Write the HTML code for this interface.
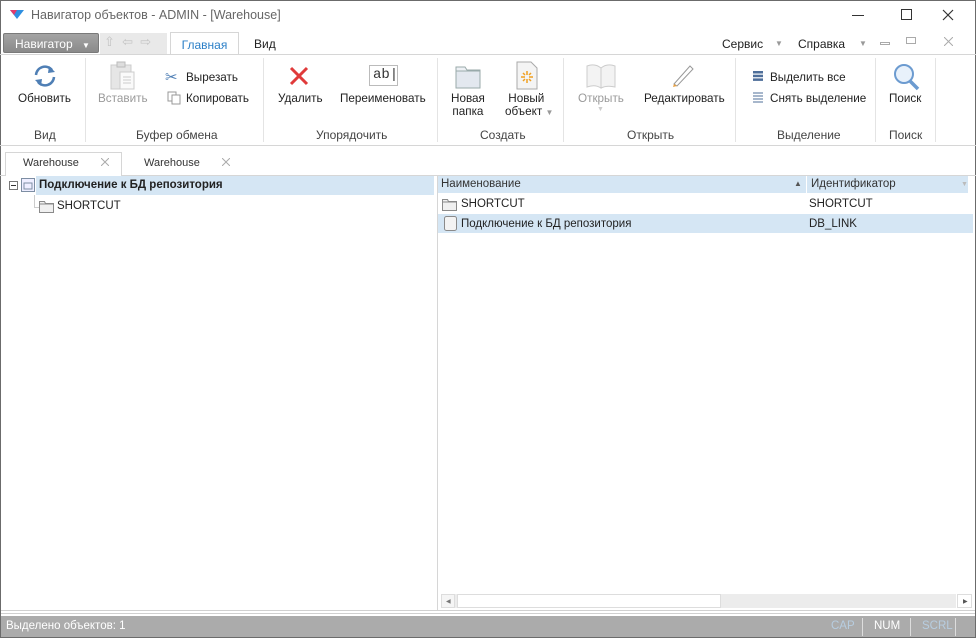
<!DOCTYPE html>
<html><head><meta charset="utf-8"><style>
*{box-sizing:border-box;margin:0;padding:0}
body{width:976px;height:638px;overflow:hidden;background:#fff;font-family:"Liberation Sans","DejaVu Sans",sans-serif;font-size:12px;color:#222;position:relative}
.a{position:absolute;white-space:nowrap}
.win{position:absolute;left:0;top:0;width:976px;height:638px;border:1px solid #6b6b6b}
.sep{position:absolute;top:58px;width:1px;height:84px;background:#e4e4e4}
.gl{position:absolute;top:128px;font-size:12px;color:#444;text-align:center}
.lbl{font-size:11.7px;color:#222}
.dis{color:#9a9a9a}
</style></head><body>
<div class="win"></div>
<svg class="a" style="left:10px;top:10px" width="14" height="10"><polygon points="0,0 14,0 7,9" fill="#2f8fe0"/><polygon points="0,0 7,0 4,5" fill="#e23a6c"/></svg>
<div class="a" style="left:31px;top:8px;font-size:12.5px;color:#666">Навигатор объектов - ADMIN - [Warehouse]</div>
<div class="a" style="left:852px;top:15px;width:12px;height:1px;background:#333"></div>
<div class="a" style="left:901px;top:9px;width:11px;height:11px;border:1px solid #333"></div>
<svg class="a" style="left:942px;top:9px" width="12" height="12" stroke="#333" stroke-width="1.2"><path d="M1 1L11 11M11 1L1 11"/></svg>
<div class="a" style="left:3px;top:33px;width:96px;height:20px;background:linear-gradient(#a4a4a4,#8a8a8a);border:1px solid #7a7a7a;border-radius:2px;color:#fff;font-size:12px;padding:3px 0 0 11px">Навигатор <span style="font-size:8px;margin-left:6px">▼</span></div>
<div class="a" style="left:100px;top:33px;width:67px;height:21px;background:#e9e9e9;color:#c4c4c4;font-size:13px;padding:1px 0 0 4px">⇧ &nbsp;⇦ &nbsp;⇨</div>
<div class="a" style="left:170px;top:32px;width:69px;height:23px;background:#fff;border:1px solid #d6d6d6;border-bottom:none;color:#2b7fc7;font-size:12px;text-align:center;padding-top:5px">Главная</div>
<div class="a" style="left:254px;top:37px">Вид</div>
<div class="a" style="left:722px;top:37px">Сервис</div>
<div class="a" style="left:775px;top:39px;font-size:8px;color:#999">▼</div>
<div class="a" style="left:798px;top:37px">Справка</div>
<div class="a" style="left:859px;top:39px;font-size:8px;color:#999">▼</div>
<div class="a" style="left:880px;top:42px;width:10px;height:3px;border:1px solid #aaa"></div>
<div class="a" style="left:906px;top:37px;width:10px;height:7px;border:1px solid #aaa"></div>
<svg class="a" style="left:944px;top:37px" width="9" height="9" stroke="#aaa"><path d="M0 0L9 9M9 0L0 9"/></svg>
<div class="a" style="left:0;top:54px;width:976px;height:1px;background:#d6d6d6"></div>
<div class="sep" style="left:85px"></div><div class="sep" style="left:263px"></div><div class="sep" style="left:437px"></div><div class="sep" style="left:563px"></div><div class="sep" style="left:735px"></div><div class="sep" style="left:875px"></div><div class="sep" style="left:935px"></div>
<svg class="a" style="left:32px;top:64px" width="26" height="24" fill="none" stroke="#4f7fb5" stroke-width="2.5"><path d="M4 11a9 9 0 0 1 16-5"/><path d="M22 13a9 9 0 0 1-16 5"/><polygon points="17,2 23,8 16,9" fill="#4f7fb5" stroke="none"/><polygon points="9,22 3,16 10,15" fill="#4f7fb5" stroke="none"/></svg>
<div class="a lbl" style="left:18px;top:92px">Обновить</div>
<svg class="a" style="left:110px;top:61px" width="26" height="30"><rect x="1" y="4" width="20" height="24" fill="#e6e6e6" stroke="#ccc"/><rect x="7" y="1" width="8" height="5" fill="#ddd" stroke="#bbb"/><rect x="10" y="11" width="14" height="17" fill="#fafafa" stroke="#ccc"/><path d="M13 16h8M13 19h8M13 22h8" stroke="#ccc"/></svg>
<div class="a lbl dis" style="left:98px;top:92px">Вставить</div>
<div class="a" style="left:165px;top:68px;color:#4f7fb5;font-size:15px">✂</div>
<div class="a lbl" style="left:186px;top:71px">Вырезать</div>
<svg class="a" style="left:167px;top:91px" width="14" height="14"><rect x="1" y="1" width="8" height="9" fill="#fff" stroke="#999"/><rect x="5" y="4" width="8" height="9" fill="#fff" stroke="#999"/></svg>
<div class="a lbl" style="left:186px;top:92px">Копировать</div>
<svg class="a" style="left:289px;top:66px" width="20" height="20" stroke="#e03a3a" stroke-width="3"><path d="M2 2L18 18M18 2L2 18"/></svg>
<div class="a lbl" style="left:278px;top:92px">Удалить</div>
<div class="a" style="left:369px;top:65px;width:29px;height:21px;border:1px solid #bbb;font-size:14px;padding:1px 0 0 3px;color:#333;font-family:'Liberation Mono',monospace">ab|</div>
<div class="a lbl" style="left:340px;top:92px">Переименовать</div>
<svg class="a" style="left:455px;top:63px" width="26" height="26"><path d="M1 4h9l2 3h13v18H1z" fill="#eef1f5" stroke="#9aa"/><rect x="1" y="8" width="24" height="17" fill="#e3e8ef" stroke="#9aa"/></svg>
<div class="a lbl" style="left:451px;top:92px;line-height:13px;text-align:center">Новая<br>папка</div>
<svg class="a" style="left:516px;top:61px" width="22" height="29"><path d="M1 1h14l6 6v21H1z" fill="#f4f4f4" stroke="#aaa"/><g stroke="#f0a020" stroke-width="1.5"><path d="M11 10v4M11 18v4M5 16h4M13 16h4M7 12l2 2M15 12l-2 2M7 20l2-2M15 20l-2-2"/></g></svg>
<div class="a lbl" style="left:505px;top:92px;line-height:13px">&nbsp;Новый<br>объект <span style="font-size:8px;color:#999">▼</span></div>
<svg class="a" style="left:585px;top:62px" width="34" height="28" fill="#f3f3f3" stroke="#ccc"><path d="M2 4q8-3 14 2v20q-6-4-14-1z"/><path d="M16 6q6-5 14-2v21q-8-2-14 1z"/></svg>
<div class="a lbl dis" style="left:578px;top:92px">Открыть</div>
<div class="a" style="left:597px;top:106px;font-size:7px;color:#ccc">▼</div>
<svg class="a" style="left:670px;top:62px" width="26" height="26"><path d="M4 22L20 4l3 3L7 24z" fill="#fff" stroke="#999"/><path d="M4 22l-1 3 4-1z" fill="#e8a040"/></svg>
<div class="a lbl" style="left:644px;top:92px">Редактировать</div>
<svg class="a" style="left:753px;top:71px" width="10" height="10" fill="#4f6f9a"><rect y="0" width="10" height="2.5"/><rect y="3.7" width="10" height="2.5"/><rect y="7.4" width="10" height="2.5"/></svg>
<div class="a lbl" style="left:770px;top:71px">Выделить все</div>
<svg class="a" style="left:753px;top:92px" width="10" height="11" fill="none" stroke="#4f6f9a"><path d="M0 1h10M0 4h10M0 7h10M0 10h10"/></svg>
<div class="a lbl" style="left:770px;top:92px">Снять выделение</div>
<svg class="a" style="left:892px;top:63px" width="30" height="28"><circle cx="12" cy="11" r="9" fill="#e8f1fb" stroke="#6c9bd0" stroke-width="2"/><path d="M18 18l8 8" stroke="#6c9bd0" stroke-width="3.5"/></svg>
<div class="a lbl" style="left:889px;top:92px">Поиск</div>
<div class="gl" style="left:34px">Вид</div>
<div class="gl" style="left:136px">Буфер обмена</div>
<div class="gl" style="left:316px">Упорядочить</div>
<div class="gl" style="left:480px">Создать</div>
<div class="gl" style="left:627px">Открыть</div>
<div class="gl" style="left:777px">Выделение</div>
<div class="gl" style="left:889px">Поиск</div>
<div class="a" style="left:0;top:145px;width:976px;height:1px;background:#d6d6d6"></div>
<div class="a" style="left:5px;top:152px;width:117px;height:24px;border:1px solid #d6d6d6;border-bottom:none;background:#fff"></div>
<div class="a" style="left:23px;top:157px;font-size:11px;color:#333">Warehouse</div>
<svg class="a" style="left:101px;top:158px" width="8" height="8" stroke="#aaa"><path d="M0 0L8 8M8 0L0 8"/></svg>
<div class="a" style="left:144px;top:157px;font-size:11px;color:#333">Warehouse</div>
<svg class="a" style="left:222px;top:158px" width="8" height="8" stroke="#aaa"><path d="M0 0L8 8M8 0L0 8"/></svg>
<div class="a" style="left:0;top:175px;width:5px;height:1px;background:#d6d6d6"></div>
<div class="a" style="left:122px;top:175px;width:854px;height:1px;background:#d6d6d6"></div>
<div class="a" style="left:9px;top:181px;width:9px;height:9px;border:1px solid #777;background:#fff"></div>
<div class="a" style="left:11px;top:185px;width:5px;height:1px;background:#333"></div>
<svg class="a" style="left:21px;top:178px" width="14" height="14"><rect x="0.5" y="0.5" width="13" height="13" fill="#eef" stroke="#7d8ea3"/><rect x="3" y="5" width="8" height="6" fill="none" stroke="#7d8ea3"/></svg>
<div class="a" style="left:36px;top:176px;width:398px;height:19px;background:#d5e6f4"></div>
<div class="a" style="left:39px;top:179px;font-weight:bold;font-size:11.5px">Подключение к БД репозитория</div>
<div class="a" style="left:34px;top:195px;width:1px;height:12px;background:#ccc"></div>
<div class="a" style="left:34px;top:207px;width:5px;height:1px;background:#ccc"></div>
<svg class="a" style="left:39px;top:200px" width="16" height="13"><path d="M0.5 1.5h5l1 2h8v9H0.5z" fill="#f0f0f0" stroke="#8a8a8a"/><path d="M0.5 4h14" stroke="#8a8a8a"/></svg>
<div class="a" style="left:57px;top:200px;font-size:11.5px">SHORTCUT</div>
<div class="a" style="left:437px;top:176px;width:1px;height:434px;background:#d6d6d6"></div>
<div class="a" style="left:438px;top:176px;width:530px;height:17px;background:#d5e6f4"></div>
<div class="a" style="left:806px;top:176px;width:1px;height:17px;background:#fff"></div>
<div class="a" style="left:441px;top:178px;font-size:11.5px;color:#333">Наименование</div>
<div class="a" style="left:794px;top:179px;font-size:8px;color:#555">▲</div>
<div class="a" style="left:811px;top:178px;font-size:11.5px;color:#333">Идентификатор</div>
<div class="a" style="left:961px;top:181px;font-size:7px;color:#bbb">▼</div>
<svg class="a" style="left:442px;top:198px" width="16" height="13"><path d="M0.5 1.5h5l1 2h8v9H0.5z" fill="#f0f0f0" stroke="#8a8a8a"/><path d="M0.5 4h14" stroke="#8a8a8a"/></svg>
<div class="a" style="left:461px;top:198px;font-size:11.5px">SHORTCUT</div>
<div class="a" style="left:809px;top:198px;font-size:11.5px">SHORTCUT</div>
<div class="a" style="left:438px;top:214px;width:535px;height:19px;background:#d5e6f4"></div>
<svg class="a" style="left:444px;top:216px" width="13" height="15"><rect x="0.5" y="0.5" width="12" height="14" rx="2" fill="#f3f3f3" stroke="#8a8a8a"/></svg>
<div class="a" style="left:461px;top:218px;font-size:11.5px">Подключение к БД репозитория</div>
<div class="a" style="left:809px;top:218px;font-size:11.5px">DB_LINK</div>
<div class="a" style="left:438px;top:592px;width:537px;height:18px;background:#fff"></div>
<div class="a" style="left:441px;top:594px;width:515px;height:14px;background:#ececec"></div>
<div class="a" style="left:441px;top:594px;width:14px;height:14px;background:#f5f5f5;border:1px solid #ddd;font-size:6px;color:#777;padding:3px 0 0 4px">◀</div>
<div class="a" style="left:457px;top:594px;width:264px;height:14px;background:#fff;border:1px solid #ddd"></div>
<div class="a" style="left:957px;top:594px;width:15px;height:14px;background:#fff;border:1px solid #ddd;font-size:6px;color:#555;padding:3px 0 0 5px">▶</div>
<div class="a" style="left:1px;top:610px;width:974px;height:1px;background:#d0d0d0"></div>
<div class="a" style="left:1px;top:613px;width:974px;height:1px;background:#d0d0d0"></div>
<div class="a" style="left:1px;top:616px;width:974px;height:21px;background:#ababab"></div>
<div class="a" style="left:6px;top:620px;font-size:11.5px;color:#fff">Выделено объектов: 1</div>
<div class="a" style="left:831px;top:620px;font-size:11.5px;color:#b7cde0">CAP</div>
<div class="a" style="left:862px;top:618px;width:1px;height:18px;background:#ddd"></div>
<div class="a" style="left:874px;top:620px;font-size:11.5px;color:#fff">NUM</div>
<div class="a" style="left:910px;top:618px;width:1px;height:18px;background:#ddd"></div>
<div class="a" style="left:922px;top:620px;font-size:11.5px;color:#b7cde0">SCRL</div>
<div class="a" style="left:955px;top:618px;width:1px;height:18px;background:#ddd"></div>
</body></html>
